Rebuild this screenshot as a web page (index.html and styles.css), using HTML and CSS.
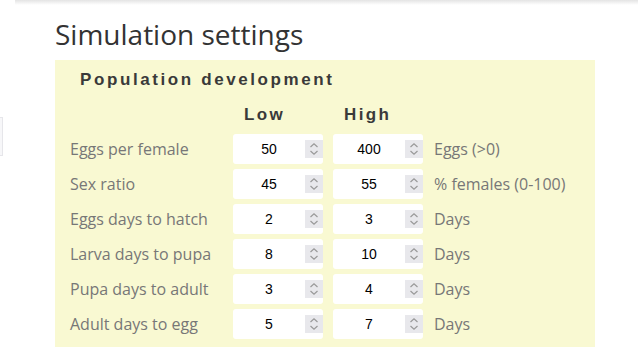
FILE: index.html
```html
<!DOCTYPE html>
<html>
<head>
<meta http-equiv="Content-Type" content="text/html; charset=UTF-8">
<title>Simulation settings</title>
<link rel="stylesheet" href="styles.css">
</head>
<body>
<div class="top-shadow"></div>
<div class="side-tab"></div>

<div class="main">
  <h1 class="page-title">Simulation settings</h1>

  <div class="settings-box">
    <h2 class="box-title">Population development</h2>
    <div class="settings-grid">
      <div></div>
      <div class="col-head">Low</div>
      <div class="col-head">High</div>
      <div></div>

      <div class="row-label">Eggs per female</div>
      <div class="num-input"><span class="num-value">50</span><span class="spin"></span></div>
      <div class="num-input"><span class="num-value">400</span><span class="spin"></span></div>
      <div class="row-unit">Eggs (&gt;0)</div>

      <div class="row-label">Sex ratio</div>
      <div class="num-input"><span class="num-value">45</span><span class="spin"></span></div>
      <div class="num-input"><span class="num-value">55</span><span class="spin"></span></div>
      <div class="row-unit">% females (0-100)</div>

      <div class="row-label">Eggs days to hatch</div>
      <div class="num-input"><span class="num-value">2</span><span class="spin"></span></div>
      <div class="num-input"><span class="num-value">3</span><span class="spin"></span></div>
      <div class="row-unit">Days</div>

      <div class="row-label">Larva days to pupa</div>
      <div class="num-input"><span class="num-value">8</span><span class="spin"></span></div>
      <div class="num-input"><span class="num-value">10</span><span class="spin"></span></div>
      <div class="row-unit">Days</div>

      <div class="row-label">Pupa days to adult</div>
      <div class="num-input"><span class="num-value">3</span><span class="spin"></span></div>
      <div class="num-input"><span class="num-value">4</span><span class="spin"></span></div>
      <div class="row-unit">Days</div>

      <div class="row-label">Adult days to egg</div>
      <div class="num-input"><span class="num-value">5</span><span class="spin"></span></div>
      <div class="num-input"><span class="num-value">7</span><span class="spin"></span></div>
      <div class="row-unit">Days</div>
    </div>
  </div>
</div>
</body>
</html>
```

FILE: styles.css
```css
body {
  margin: 0;
  background-color: #fff;
  font-family: "Open Sans", sans-serif;
  color: #333;
}
.top-shadow {
  height: 5px;
  margin-left: 15px;
  background: linear-gradient(#e4e4e4, #fff);
}
.side-tab {
  position: absolute;
  left: -10px;
  top: 117px;
  width: 11px;
  height: 37px;
  border: 1px solid #e6e6ea;
  background-color: #f7f7f9;
}
.main {
  padding-left: 55px;
  width: 540px;
}
.page-title {
  margin: 7px 0 0 0;
  height: 48px;
  font-family: "Open Sans", sans-serif;
  font-weight: normal;
  font-size: 28px;
  line-height: 44px;
  color: #333;
}
.settings-box {
  background-color: #f9f9d2;
  padding: 8px 0 8px 15px;
}
.box-title {
  margin: 0 0 0 10px;
  font-family: "Liberation Sans", Arial, sans-serif;
  font-weight: bold;
  font-size: 17px;
  letter-spacing: 2.6px;
  line-height: 24px;
  color: #3a3a3a;
}
.settings-grid {
  display: grid;
  grid-template-columns: 153px 90px 90px auto;
  column-gap: 10px;
  row-gap: 5px;
  margin-top: 11px;
}
.col-head {
  padding-left: 11px;
  margin-bottom: 2px;
  font-family: "Liberation Sans", Arial, sans-serif;
  font-weight: bold;
  font-size: 17px;
  letter-spacing: 2.4px;
  line-height: 24px;
  color: #3a3a3a;
}
.row-label,
.row-unit {
  font-size: 16px;
  line-height: 30px;
  color: #777;
}
.row-unit {
  padding-left: 1px;
}
.num-input {
  display: flex;
  align-items: center;
  height: 30px;
  background-color: #fff;
  border-radius: 3px;
}
.num-value {
  flex: 1;
  text-align: center;
  font-family: "Liberation Sans", Arial, sans-serif;
  font-size: 14px;
  color: #000;
}
.spin {
  width: 18px;
  height: 18px;
  background-color: #e8e8ec;
  background-image:
    url("data:image/svg+xml;utf8,<svg xmlns='http://www.w3.org/2000/svg' width='18' height='18'><path d='M5.5 7 L9 3.8 L12.5 7 M5.5 11 L9 14.2 L12.5 11' fill='none' stroke='%23999' stroke-width='1.2'/></svg>");
}
```
